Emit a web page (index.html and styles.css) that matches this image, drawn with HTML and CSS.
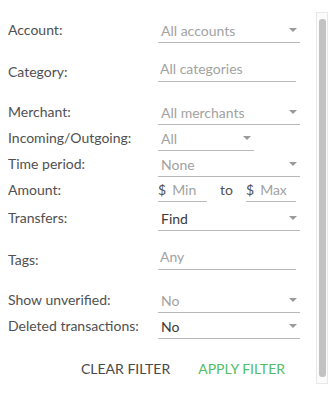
FILE: index.html
```html
<!DOCTYPE html>
<html>
<head>
<meta charset="utf-8">
<link rel="stylesheet" href="styles.css">
</head>
<body>
<div class="page">
  <form class="filter">
    <div class="row first">
      <span class="label">Account:</span>
      <div class="field select wide"><span class="ph">All accounts</span><i class="caret"></i></div>
    </div>
    <div class="row gap-m input-row">
      <span class="label">Category:</span>
      <div class="field text mid"><span class="ph">All categories</span></div>
    </div>
    <div class="row gap-l">
      <span class="label">Merchant:</span>
      <div class="field select wide"><span class="ph">All merchants</span><i class="caret"></i></div>
    </div>
    <div class="row">
      <span class="label">Incoming/Outgoing:</span>
      <div class="field select narrow"><span class="ph">All</span><i class="caret"></i></div>
    </div>
    <div class="row">
      <span class="label">Time period:</span>
      <div class="field select wide"><span class="ph">None</span><i class="caret"></i></div>
    </div>
    <div class="row amount-row">
      <span class="label">Amount:</span>
      <div class="range">
        <div class="field text money"><span class="cur">$</span><span class="ph">Min</span></div>
        <span class="to">to</span>
        <div class="field text money"><span class="cur">$</span><span class="ph">Max</span></div>
      </div>
    </div>
    <div class="row gap-s">
      <span class="label">Transfers:</span>
      <div class="field select wide"><span class="val">Find</span><i class="caret"></i></div>
    </div>
    <div class="row gap-m input-row">
      <span class="label">Tags:</span>
      <div class="field text mid"><span class="ph">Any</span></div>
    </div>
    <div class="row gap-l">
      <span class="label">Show unverified:</span>
      <div class="field select wide"><span class="ph">No</span><i class="caret"></i></div>
    </div>
    <div class="row">
      <span class="label">Deleted transactions:</span>
      <div class="field select wide"><span class="val">No</span><i class="caret"></i></div>
    </div>
    <div class="actions">
      <button type="button" class="btn clear">CLEAR FILTER</button>
      <button type="button" class="btn apply">APPLY FILTER</button>
    </div>
  </form>
  <div class="scrollbar"><div class="thumb"></div></div>
</div>
</body>
</html>
```

FILE: styles.css
```css
html, body {
  margin: 0;
  padding: 0;
  background: #ffffff;
}
body {
  font-family: Lato, "Open Sans", sans-serif;
  font-size: 14px;
  color: #505050;
}
.page {
  position: relative;
  width: 329px;
  height: 400px;
  overflow: hidden;
}
.filter {
  width: 292px;
  padding: 17px 0 0 8px;
}
.row {
  display: flex;
  align-items: center;
  height: 26px;
}
.gap-s { margin-top: 3px; }
.gap-m { margin-top: 13px; }
.gap-l { margin-top: 17px; }
.amount-row { height: 25px; }
.label {
  width: 150px;
  flex: none;
  color: #505050;
  line-height: 20px;
}
.input-row .label {
  padding-top: 6px;
}
.field {
  box-sizing: border-box;
  height: 26px;
  border-bottom: 1px solid #b8b8b8;
  display: flex;
  align-items: center;
  padding-top: 1px;
}
.amount-row .field { height: 25px; }
.select {
  padding-left: 3px;
  padding-right: 3px;
}
.text {
  padding-left: 2px;
  padding-bottom: 1px;
}
.wide { width: 142px; }
.mid { width: 138px; }
.narrow { width: 96px; }
.ph { color: #a2a2a2; }
.val { color: #3a3a3a; }
.caret {
  margin-left: auto;
  width: 0;
  height: 0;
  border-left: 4px solid transparent;
  border-right: 4px solid transparent;
  border-top: 4px solid #9a9a9a;
}
.range {
  display: flex;
  align-items: center;
}
.money {
  width: 49px;
  padding-left: 0;
}
.money + .to + .money { width: 50px; }
.cur {
  color: #505050;
  margin-right: 6px;
}
.to {
  width: 39px;
  padding-left: 13px;
  box-sizing: border-box;
  color: #505050;
}
.actions {
  display: flex;
  justify-content: flex-end;
  gap: 28px;
  margin-top: 20px;
  padding-right: 15px;
}
.btn {
  background: none;
  border: none;
  padding: 0;
  font-family: inherit;
  font-size: 14px;
  line-height: 20px;
  cursor: pointer;
}
.clear { color: #484848; }
.apply { color: #52bd62; }
.scrollbar {
  position: absolute;
  left: 316px;
  top: 12px;
  width: 12px;
  height: 372px;
  box-sizing: border-box;
  border: 1px solid #e8e8e8;
  background: #fbfbfb;
}
.thumb {
  position: absolute;
  left: 2px;
  top: 6px;
  width: 7px;
  height: 358px;
  border-radius: 3px;
  background: #c2c2c2;
}
```
